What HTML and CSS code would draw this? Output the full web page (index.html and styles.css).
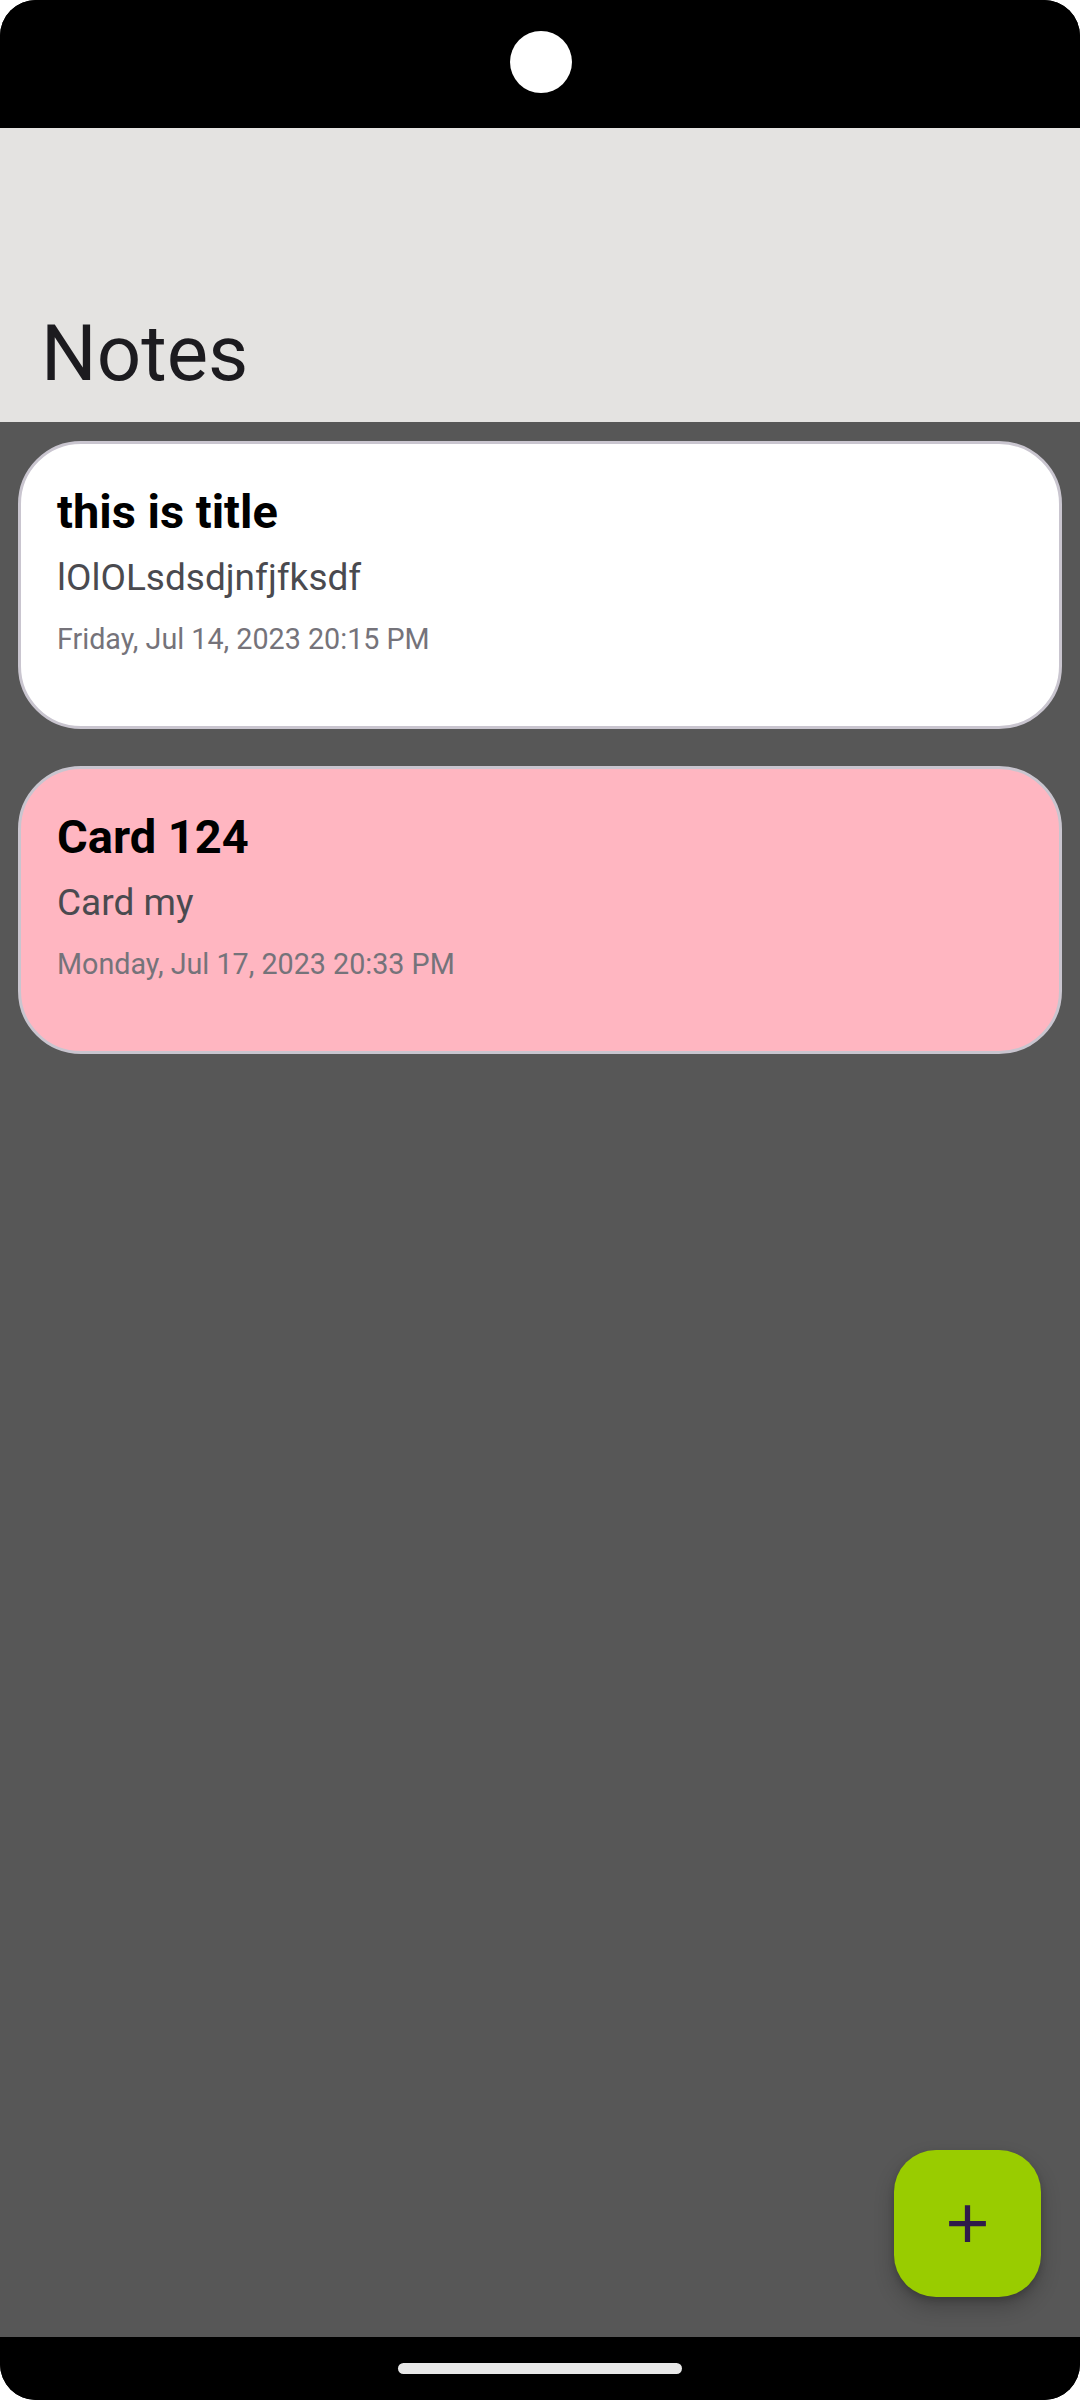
FILE: index.html
```html
<!DOCTYPE html>
<html lang="en">
<head>
<meta charset="utf-8">
<title>Notes</title>
<link rel="stylesheet" href="styles.css">
</head>
<body>
<div class="screen">
  <div class="status-bar"><div class="camera"></div></div>
  <header class="app-bar"><h1 class="app-title">Notes</h1></header>
  <main class="content">
    <div class="note-list">
      <article class="note-card">
        <h2 class="note-title">this is title</h2>
        <p class="note-body">lOlOLsdsdjnfjfksdf</p>
        <p class="note-date">Friday, Jul 14, 2023 20:15 PM</p>
      </article>
      <article class="note-card note-pink">
        <h2 class="note-title">Card 124</h2>
        <p class="note-body">Card my</p>
        <p class="note-date">Monday, Jul 17, 2023 20:33 PM</p>
      </article>
    </div>
    <button class="fab" aria-label="Add note">
      <svg viewBox="0 0 24 24" width="63" height="63"><path d="M19 13h-6v6h-2v-6H5v-2h6V5h2v6h6v2z" fill="#2f1b4a"/></svg>
    </button>
  </main>
  <div class="nav-bar"><div class="handle"></div></div>
</div>
</body>
</html>
```

FILE: styles.css
```css
html, body {
  margin: 0;
  padding: 0;
  background: #ffffff;
}
.screen {
  width: 1080px;
  height: 2400px;
  display: flex;
  flex-direction: column;
  border-radius: 36px;
  overflow: hidden;
  background: #000;
  font-family: Roboto, "Noto Sans", sans-serif;
}
.status-bar {
  height: 128px;
  flex: none;
  background: #000;
  display: flex;
  justify-content: center;
  align-items: flex-start;
  box-sizing: border-box;
  padding-top: 31px;
}
.camera {
  width: 62px;
  height: 62px;
  border-radius: 50%;
  background: #fff;
  margin-left: 2px;
}
.app-bar {
  height: 294px;
  flex: none;
  background: #e4e3e1;
  display: flex;
  align-items: flex-end;
  box-sizing: border-box;
  padding: 0 0 18px 41px;
}
.app-title {
  margin: 0;
  font-weight: 400;
  font-size: 78px;
  line-height: 100px;
  color: #1c1b1f;
}
.content {
  flex: 1;
  background: #575757;
  position: relative;
}
.note-list {
  display: flex;
  flex-direction: column;
  gap: 37px;
  padding: 19px 18px;
}
.note-card {
  height: 288px;
  box-sizing: border-box;
  background: #ffffff;
  border: 3px solid #c9c5cf;
  border-radius: 63px;
  padding: 38px 36px 0 36px;
}
.note-pink {
  background: #ffb6c1;
}
.note-title {
  margin: 0;
  font-size: 47px;
  line-height: 60px;
  font-weight: 700;
  color: #000;
}
.note-body {
  margin: 8px 0 0 0;
  font-size: 37px;
  line-height: 56px;
  color: #4a4a4f;
}
.note-date {
  margin: 13px 0 0 0;
  font-size: 28.7px;
  line-height: 40px;
  color: #75737a;
}
.fab {
  position: absolute;
  right: 39px;
  bottom: 40px;
  width: 147px;
  height: 147px;
  border: none;
  border-radius: 42px;
  background: #99cc00;
  display: flex;
  align-items: center;
  justify-content: center;
  padding: 0;
  box-shadow: 0 10px 20px rgba(0,0,0,0.22), 0 3px 6px rgba(0,0,0,0.16);
}
.nav-bar {
  height: 63px;
  flex: none;
  background: #000;
  display: flex;
  justify-content: center;
  padding-top: 26px;
  box-sizing: border-box;
}
.handle {
  width: 284px;
  height: 11px;
  border-radius: 6px;
  background: #e8e8e8;
}
```
